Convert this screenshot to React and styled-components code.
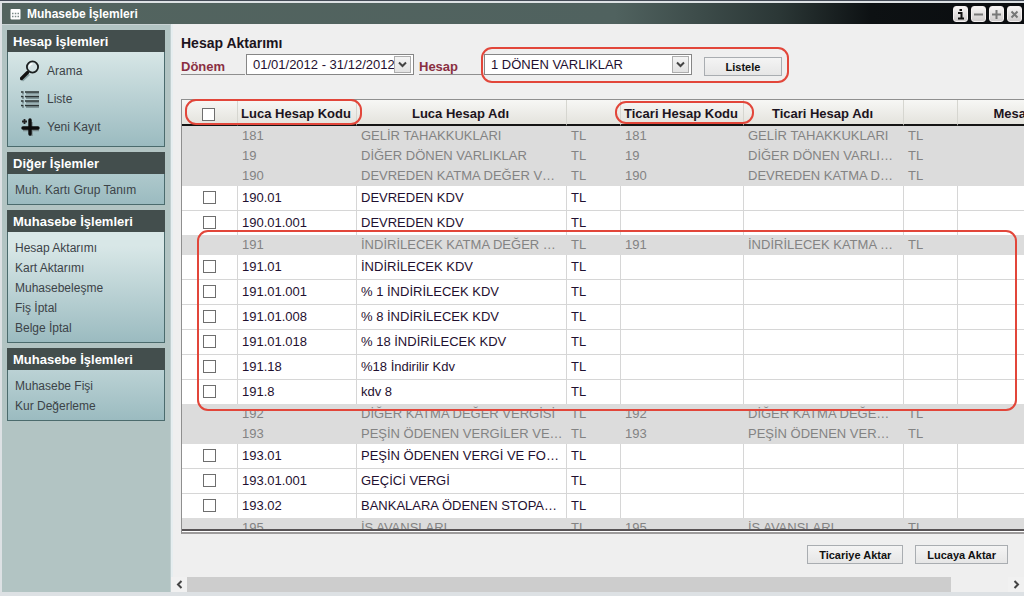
import { useState } from 'react'
import { styled, createGlobalStyle } from 'styled-components'

const font = '"Liberation Sans", Arial, sans-serif'
const red = '#e2463a'

const GlobalStyle = createGlobalStyle`
  * {
    box-sizing: border-box;
  }

  body {
    margin: 0;
    background: #dfe0e0;
    font-family: ${font};
    font-size: 13px;
    color: #1c1420;
  }

  button, select, input {
    font-family: ${font};
    margin: 0;
  }
`

const Window = styled.div`
  display: flex;
  flex-direction: column;
  height: 100vh;
  padding: 2px 0 4px 2px;
  border-top: 1px solid #454c58;
  background: #dde1e4;
  overflow: hidden;
`

const TitleBar = styled.header`
  display: flex;
  flex: none;
  align-items: center;
  gap: 6px;
  height: 21px;
  padding: 0 2px 0 8px;
  background: linear-gradient(90deg, #53645f 0%, #50625f 60%, #2b3736 76%, #0d1113 85%, #0a0c0f 100%);
`

const Caption = styled.h1`
  flex: 1;
  margin: 0;
  font-size: 12px;
  line-height: 22px;
  color: #fff;
`

const WindowButtons = styled.div`
  display: flex;
  gap: 3px;
`

const WindowButton = styled.button`
  display: flex;
  width: 15px;
  height: 16px;
  padding: 0;
  border: 1px solid #f4f0f0;
  border-radius: 3px;
  background: linear-gradient(#f6f4f4, #cfcccc);
  color: ${p => (p.$dark ? '#111' : '#777')};
`

const Body = styled.div`
  display: flex;
  flex: 1;
  min-height: 0;
`

const Sidebar = styled.nav`
  display: flex;
  flex: none;
  flex-direction: column;
  gap: 5px;
  width: 169px;
  padding: 5px 5px 0;
  border-top: 1px solid #c9d3d4;
  border-right: 1px solid #c2d0d1;
  background: #b2c4c3;
`

const Panel = styled.section`
  border: 1px solid #4b6b6d;
  border-top: 0;
  background: #d8e7e7 linear-gradient(#d8e7e7, #9bbbc0) bottom / 100% 96px no-repeat;
`

const PanelTitle = styled.h2`
  margin: 0 -1px;
  padding: 2px 0 0 6px;
  background: #434e4d;
  color: #fff;
  font-size: 13px;
  line-height: 20px;
`

const PanelList = styled.ul`
  margin: 0;
  padding: ${p => (p.$icons ? '5px 7px' : '6px 7px 4px')};
  list-style: none;
`

const PanelLink = styled.a`
  display: flex;
  align-items: center;
  gap: 7px;
  height: ${p => (p.$icon ? '28px' : '20px')};
  padding-left: ${p => (p.$icon ? '5px' : '0')};
  color: #3c4348;
  font-size: 12px;
  text-decoration: none;
`

const Content = styled.main`
  position: relative;
  display: flex;
  flex: 1;
  flex-direction: column;
  min-width: 0;
  border-left: 2px solid #e6eef0;
  background: #efefef;
`

const PageTitle = styled.h2`
  margin: 0;
  padding: 10px 8px 1px;
  font-size: 14px;
  line-height: 18px;
`

const Filters = styled.form`
  display: flex;
  flex: none;
  align-items: flex-start;
  gap: 5px;
  height: 46px;
  padding: 1px 8px 0;
`

const Field = styled.div`
  display: flex;
  gap: 1px;
  margin-right: ${p => p.$after || '0'};
`

const FieldLabel = styled.label`
  width: 64px;
  height: 21px;
  padding-top: 4px;
  border-bottom: 1px solid #8f8f8f;
  color: #8a2f42;
  font-weight: bold;
  line-height: 18px;
`

const SelectBox = styled.div`
  display: flex;
  align-items: center;
  width: ${p => p.$width};
  height: 21px;
  padding-right: 2px;
  border: 1px solid #868686;
  background: #fff;
`

const Select = styled.select`
  flex: 1;
  min-width: 0;
  height: 19px;
  margin-right: -17px;
  padding: 0 17px 0 6px;
  border: 0;
  appearance: none;
  background: transparent;
  color: #1f1030;
  font-size: 13px;
  line-height: 19px;
`

const Arrow = styled.span`
  display: flex;
  flex: none;
  align-items: center;
  justify-content: center;
  width: 17px;
  height: 17px;
  border: 1px solid #adadad;
  background: linear-gradient(#f4f4f4, #e2e2e2);
  pointer-events: none;
`

const Button = styled.button`
  height: 19px;
  min-width: 78px;
  margin-top: ${p => (p.$low ? '3px' : '0')};
  padding: 0 11px;
  border: 1px solid #a9adb1;
  background: linear-gradient(#f4f4f4, #e6e6e6);
  color: #111;
  font-size: 11px;
  font-weight: bold;
  line-height: 16px;
`

const GridFrame = styled.div`
  flex: 1;
  min-height: 0;
  margin-left: 8px;
  padding-bottom: 1px;
  border: 1px solid #8f8f8f;
  border-right: 0;
  border-bottom: 2px solid #9d9b9b;
  background: #fff;
`

const GridScroll = styled.div`
  height: 100%;
  border-bottom: 2px solid #575355;
  overflow: hidden;
`

const Grid = styled.table`
  width: 100%;
  min-width: 886px;
  border-spacing: 0;
  border-collapse: separate;
  table-layout: fixed;
`

const Head = styled.th`
  height: 26px;
  padding: 4px 2px 0 0;
  border-right: 1px solid #d6d6d0;
  border-bottom: 2px solid #141414;
  background: linear-gradient(#f7f7f5, #e4e3dd);
  white-space: nowrap;
  line-height: 16px;
`

const Row = styled.tr`
  height: ${p => (p.$group ? '20px' : p.$last ? '24px' : '25px')};
  background: ${p => (p.$group ? '#dcdcdc' : '#fff')};
  color: ${p => (p.$group ? '#838383' : '#1f1030')};

  td {
    border-right: 1px solid ${p => (p.$group ? '#dcdcdc' : '#d6d6d6')};
    border-bottom: ${p => (p.$group || p.$last ? '0' : '1px solid #d6d6d6')};
    padding-bottom: ${p => (p.$group ? '0' : '1px')};
  }
`

const Cell = styled.td`
  padding: 0 4px;
  overflow: hidden;
  white-space: nowrap;
  line-height: 18px;
`

const CheckCell = styled.td`
  padding: 0;
  text-align: center;
  line-height: 0;
`

const Check = styled.input`
  width: 13px;
  height: 13px;
  appearance: none;
  border: 1px solid #6e6e6e;
  background: #fff;
  vertical-align: middle;

  &:checked {
    box-shadow: inset 0 0 0 2px #fff;
    background: #333;
  }
`

const Actions = styled.div`
  display: flex;
  flex: none;
  justify-content: flex-end;
  gap: 12px;
  height: 43px;
  padding: 11px 16px 0 0;
`

const ScrollBar = styled.div`
  display: flex;
  flex: none;
  height: 15px;
  margin-left: -2px;
`

const ScrollButton = styled.button`
  display: flex;
  align-items: center;
  justify-content: center;
  width: 16px;
  padding: 0;
  border: 0;
  background: #f1f1f1;
`

const ScrollTrack = styled.div`
  flex: 1;
`

const ScrollThumb = styled.div`
  width: 93%;
  height: 100%;
  background: #cdcdcd;
`

// hand-drawn red outlines lying over the form and the grid
const Mark = styled.div`
  position: absolute;
  left: ${p => p.$x};
  top: ${p => p.$y};
  width: ${p => p.$w};
  height: ${p => p.$h};
  border: 2px solid ${red};
  border-radius: 11px;
  pointer-events: none;
`

const WideMark = styled(Mark)`
  width: auto;
  right: 7px;
`

const icons = {
  search: (
    <svg width="20" height="22" viewBox="0 0 20 22" fill="none">
      <path d="M2 20.5 9 14" stroke="#8aa3a6" strokeWidth="3" />
      <path d="M1.5 18.5 7.5 12.5" stroke="#111" strokeWidth="3.2" strokeLinecap="round" />
      <circle cx="12.5" cy="7" r="5.6" fill="#d3e2e4" stroke="#1b1f20" strokeWidth="1.8" />
      <path d="M9.5 6.5a3.2 3.2 0 0 1 3-2.8" stroke="#fff" strokeWidth="1.4" />
    </svg>
  ),
  list: (
    <svg width="20" height="20" viewBox="0 0 20 20" fill="none">
      <path d="M2 3.5h2m2 0h13M2 8h2m2 0h13M2 12.5h2m2 0h13M2 17h2m2 0h13" stroke="#7f9497" strokeWidth="2" transform="translate(0 1)" />
      <path d="M1 3h2.5m1.5 0h14M1 7.5h2.5m1.5 0h14M1 12h2.5m1.5 0h14M1 16.5h2.5m1.5 0h14" stroke="#2c3435" strokeWidth="1.5" />
    </svg>
  ),
  add: (
    <svg width="20" height="20" viewBox="0 0 20 20" fill="none">
      <path d="M11 5v14M3 12.5h16" stroke="#78898b" strokeWidth="3.4" />
      <path d="M10 3v14M3 11h15" stroke="#0c0c0c" strokeWidth="3.4" strokeLinecap="round" />
      <path d="M4.500 2v5M2 4.500h5" stroke="#222" strokeWidth="1.8" />
    </svg>
  ),
}

const windowGlyphs = {
  Bilgi: 'M4 6h3.500v5.500M4 11.500h6M5.500 3h2.500',
  Küçült: 'M2 7.5h9',
  Büyüt: 'M2 7.5h9M6.500 3v9',
  Kapat: 'M3.500 4.500l6 6M9.500 4.500l-6 6',
}

const panels = [
  { title: 'Hesap İşlemleri', items: [['Arama', 'search'], ['Liste', 'list'], ['Yeni Kayıt', 'add']] },
  { title: 'Diğer İşlemler', items: [['Muh. Kartı Grup Tanım']] },
  {
    title: 'Muhasebe İşlemleri',
    items: [['Hesap Aktarımı'], ['Kart Aktarımı'], ['Muhasebeleşme'], ['Fiş İptal'], ['Belge İptal']],
  },
  { title: 'Muhasebe İşlemleri', items: [['Muhasebe Fişi'], ['Kur Değerleme']] },
]

// a third value is the name on the Ticari side, only group rows have it
const rows = [
  ['181', 'GELİR TAHAKKUKLARI', 'GELİR TAHAKKUKLARI'],
  ['19', 'DİĞER DÖNEN VARLIKLAR', 'DİĞER DÖNEN VARLI…'],
  ['190', 'DEVREDEN KATMA DEĞER V…', 'DEVREDEN KATMA D…'],
  ['190.01', 'DEVREDEN KDV'],
  ['190.01.001', 'DEVREDEN KDV'],
  ['191', 'İNDİRİLECEK KATMA DEĞER …', 'İNDİRİLECEK KATMA …'],
  ['191.01', 'İNDİRİLECEK KDV'],
  ['191.01.001', '% 1 İNDİRİLECEK KDV'],
  ['191.01.008', '% 8 İNDİRİLECEK KDV'],
  ['191.01.018', '% 18 İNDİRİLECEK KDV'],
  ['191.18', '%18 İndirilir Kdv'],
  ['191.8', 'kdv 8'],
  ['192', 'DİĞER KATMA DEĞER VERGİSİ', 'DİĞER KATMA DEĞE…'],
  ['193', 'PEŞİN ÖDENEN VERGİLER VE…', 'PEŞİN ÖDENEN VER…'],
  ['193.01', 'PEŞİN ÖDENEN VERGİ VE FO…'],
  ['193.01.001', 'GEÇİCİ VERGİ'],
  ['193.02', 'BANKALARA ÖDENEN STOPA…'],
  ['195', 'İŞ AVANSLARI', 'İŞ AVANSLARI'],
]

const columns = [56, 119, 210, 54, 123, 160, 54]

function Chevron({ d }) {
  return (
    <svg width="9" height="9" viewBox="0 0 9 9" fill="none">
      <path d={d} stroke="#444" strokeWidth="2" />
    </svg>
  )
}

function DropDown({ id, label, value, width, after }) {
  return (
    <Field $after={after}>
      <FieldLabel htmlFor={id}>{label}</FieldLabel>
      <SelectBox $width={width}>
        <Select id={id} defaultValue={value}>
          <option>{value}</option>
        </Select>
        <Arrow><Chevron d="M1 2.5l3.5 3.5L8 2.5" /></Arrow>
      </SelectBox>
    </Field>
  )
}

function App() {
  const [checked, setChecked] = useState({})

  const toggle = code => setChecked({ ...checked, [code]: !checked[code] })

  return (
    <>
      <GlobalStyle />
      <Window>
        <TitleBar>
          <svg width="11" height="12" viewBox="0 0 11 12">
            <rect x="0.5" y="1" width="10" height="10.5" rx="1" fill="#fff" />
            <path d="M2 5.5h1.5M4.8 5.5h1.5M7.5 5.5H9M2 8.5h1.5M4.8 8.5h1.5M7.5 8.5H9" stroke="#7b8a88" strokeWidth="1.5" />
          </svg>
          <Caption>Muhasebe İşlemleri</Caption>
          <WindowButtons>
            {Object.entries(windowGlyphs).map(([name, d]) => (
              <WindowButton key={name} type="button" aria-label={name} $dark={name === 'Bilgi'}>
                <svg width="13" height="14" viewBox="0 0 13 14" fill="none">
                  <path d={d} stroke="currentColor" strokeWidth="2" />
                </svg>
              </WindowButton>
            ))}
          </WindowButtons>
        </TitleBar>
        <Body>
          <Sidebar>
            {panels.map((panel, i) => (
              <Panel key={i}>
                <PanelTitle>{panel.title}</PanelTitle>
                <PanelList $icons={!!panel.items[0][1]}>
                  {panel.items.map(([text, icon]) => (
                    <li key={text}>
                      <PanelLink href="#" $icon={!!icon}>
                        {icons[icon]}
                        {text}
                      </PanelLink>
                    </li>
                  ))}
                </PanelList>
              </Panel>
            ))}
          </Sidebar>
          <Content>
            <PageTitle>Hesap Aktarımı</PageTitle>
            <Filters onSubmit={e => e.preventDefault()}>
              <DropDown id="donem" label="Dönem" value="01/01/2012 - 31/12/2012" width="168px" />
              <DropDown id="hesap" label="Hesap" value="1 DÖNEN VARLIKLAR" width="208px" after="7px" />
              <Button $low>Listele</Button>
            </Filters>
            <GridFrame>
              <GridScroll>
                <Grid>
                  <colgroup>
                    {columns.map((w, i) => <col key={i} width={w} />)}
                    <col />
                  </colgroup>
                  <thead>
                    <tr>
                      <Head>
                        <Check
                          type="checkbox"
                          aria-label="Tümünü seç"
                          checked={!!checked.all}
                          onChange={() => toggle('all')}
                        />
                      </Head>
                      <Head>Luca Hesap Kodu</Head>
                      <Head>Luca Hesap Adı</Head>
                      <Head />
                      <Head>Ticari Hesap Kodu</Head>
                      <Head>Ticari Hesap Adı</Head>
                      <Head />
                      <Head>Mesaj</Head>
                    </tr>
                  </thead>
                  <tbody>
                    {rows.map(([code, name, other], i) => {
                      const next = rows[i + 1]
                      return (
                        <Row key={code} $group={!!other} $last={!!next && !!next[2]}>
                          <CheckCell>
                            {!other && (
                              <Check
                                type="checkbox"
                                aria-label={code}
                                checked={!!checked[code]}
                                onChange={() => toggle(code)}
                              />
                            )}
                          </CheckCell>
                          <Cell>{code}</Cell>
                          <Cell>{name}</Cell>
                          <Cell>TL</Cell>
                          <Cell>{other && code}</Cell>
                          <Cell>{other}</Cell>
                          <Cell>{other && 'TL'}</Cell>
                          <Cell />
                        </Row>
                      )
                    })}
                  </tbody>
                </Grid>
              </GridScroll>
            </GridFrame>
            <Actions>
              <Button>Ticariye Aktar</Button>
              <Button>Lucaya Aktar</Button>
            </Actions>
            <ScrollBar>
              <ScrollButton type="button" aria-label="Sola kaydır">
                <Chevron d="M6.5 1L3 4.5 6.5 8" />
              </ScrollButton>
              <ScrollTrack><ScrollThumb /></ScrollTrack>
              <ScrollButton type="button" aria-label="Sağa kaydır">
                <Chevron d="M2.5 1L6 4.5 2.5 8" />
              </ScrollButton>
            </ScrollBar>
            <Mark $x="12px" $y="75px" $w="177px" $h="26px" />
            <Mark $x="308px" $y="23px" $w="308px" $h="36px" />
            <Mark $x="442px" $y="77px" $w="139px" $h="23px" />
            <WideMark $x="24px" $y="206px" $h="181px" />
          </Content>
        </Body>
      </Window>
    </>
  )
}

export default App
